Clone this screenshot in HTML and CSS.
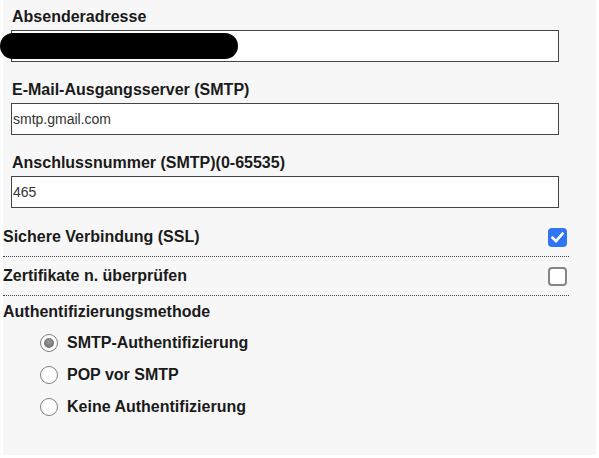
FILE: index.html
```html
<!DOCTYPE html>
<html lang="de">
<head>
<meta charset="utf-8">
<title>SMTP</title>
<link rel="stylesheet" href="styles.css">
</head>
<body>
<div class="panel">
  <div class="redact"></div>
  <div class="field">
    <label class="label">Absenderadresse</label>
    <input class="text" type="text" value="">
  </div>
  <div class="field">
    <label class="label">E-Mail-Ausgangsserver (SMTP)</label>
    <input class="text" type="text" value="smtp.gmail.com">
  </div>
  <div class="field last">
    <label class="label">Anschlussnummer (SMTP)(0-65535)</label>
    <input class="text" type="text" value="465">
  </div>
  <div class="row">
    <span class="row-label">Sichere Verbindung (SSL)</span>
    <span class="check on"><svg width="19" height="19" viewBox="0 0 19 19"><path d="M4.5 9.8 L8 13.2 L14.6 5.6" fill="none" stroke="#fff" stroke-width="2.6" stroke-linecap="square"/></svg></span>
  </div>
  <div class="row">
    <span class="row-label">Zertifikate n. überprüfen</span>
    <span class="check"></span>
  </div>
  <div class="heading">Authentifizierungsmethode</div>
  <div class="radios">
    <div class="radio-row"><span class="radio on"></span><span class="radio-label">SMTP-Authentifizierung</span></div>
    <div class="radio-row"><span class="radio"></span><span class="radio-label">POP vor SMTP</span></div>
    <div class="radio-row"><span class="radio"></span><span class="radio-label">Keine Authentifizierung</span></div>
  </div>
</div>
</body>
</html>
```
FILE: styles.css
```css
html, body {
  margin: 0;
  padding: 0;
  background: #ffffff;
}
body {
  font-family: "Liberation Sans", Arial, sans-serif;
  color: #1a1a1a;
}
.panel {
  position: relative;
  margin-left: 3px;
  width: 593px;
  height: 455px;
  box-sizing: border-box;
  padding-top: 7px;
  background: #f7f7f7;
}
.redact {
  position: absolute;
  left: -3px;
  top: 33px;
  width: 238px;
  height: 26px;
  border-radius: 13px;
  background: #000;
}
.field {
  display: flex;
  flex-direction: column;
  align-items: flex-start;
  padding-left: 8px;
  margin-bottom: 18px;
}
.field.last {
  margin-bottom: 10px;
}
.label {
  display: block;
  padding-left: 1px;
  font-size: 16px;
  font-weight: bold;
  line-height: 20px;
  margin-bottom: 3px;
}
.text {
  box-sizing: border-box;
  width: 548px;
  height: 32px;
  margin: 0;
  padding: 0 1px;
  border: 1px solid #444;
  border-radius: 0;
  background: #fff;
  font-family: "Liberation Sans", Arial, sans-serif;
  font-size: 14px;
  color: #333;
  outline: none;
}
.row {
  display: flex;
  align-items: center;
  justify-content: space-between;
  width: 566px;
  box-sizing: border-box;
  padding: 9px 2px 9px 0;
  border-bottom: 1px dotted #444;
}
.row-label, .heading, .radio-label {
  font-size: 16px;
  font-weight: bold;
  line-height: 20px;
}
.check {
  display: block;
  width: 19px;
  height: 19px;
  box-sizing: border-box;
  border-radius: 4px;
  border: 2px solid #858585;
  background: #fff;
}
.check.on {
  border: none;
  background: #2f74f5;
}
.check svg {
  display: block;
}
.heading {
  margin-top: 6px;
}
.radios {
  margin-top: 5px;
  display: flex;
  flex-direction: column;
}
.radio-row {
  display: flex;
  align-items: center;
  height: 32px;
  padding-left: 37px;
  gap: 9px;
}
.radio {
  display: block;
  width: 18px;
  height: 18px;
  box-sizing: border-box;
  border-radius: 50%;
  border: 1px solid #808080;
  background: #fff;
  position: relative;
}
.radio.on::after {
  content: "";
  position: absolute;
  left: 3px;
  top: 3px;
  width: 10px;
  height: 10px;
  border-radius: 50%;
  background: radial-gradient(circle at 50% 40%, #999 0%, #666 100%);
}
```
